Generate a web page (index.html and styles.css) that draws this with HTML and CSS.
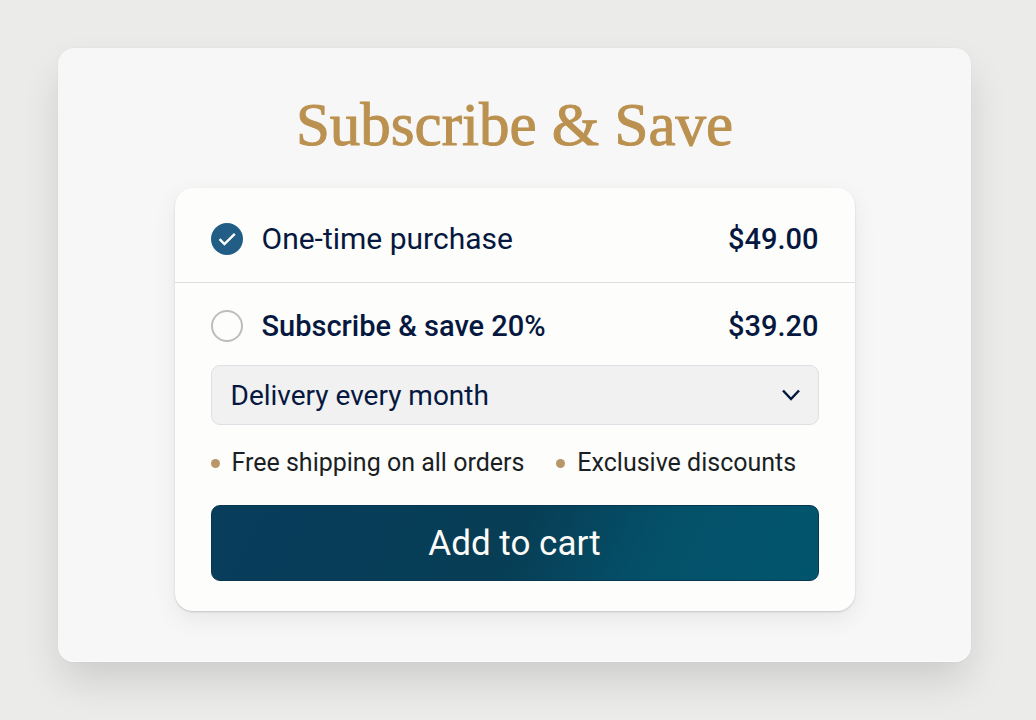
FILE: index.html
```html
<!DOCTYPE html>
<html lang="en">
<head>
<meta charset="utf-8">
<meta name="viewport" content="width=device-width, initial-scale=1">
<title>Subscribe &amp; Save</title>
<link rel="stylesheet" href="styles.css">
</head>
<body>
<main class="panel">
  <h1 class="title">Subscribe &amp; Save</h1>
  <form class="card">
    <div class="option option-single">
      <span class="choice">
        <input class="radio" type="radio" name="plan" id="plan-once" checked>
        <svg class="tick" viewBox="0 0 32 32" aria-hidden="true"><path d="M8.6 16.2 L13.4 21 L23.8 10.8"/></svg>
      </span>
      <label class="name" for="plan-once">One-time purchase</label>
      <span class="price">$49.00</span>
    </div>
    <div class="details">
      <div class="option">
        <span class="choice">
          <input class="radio" type="radio" name="plan" id="plan-sub">
          <svg class="tick" viewBox="0 0 32 32" aria-hidden="true"><path d="M8.6 16.2 L13.4 21 L23.8 10.8"/></svg>
        </span>
        <label class="name name-strong" for="plan-sub">Subscribe &amp; save 20%</label>
        <span class="price">$39.20</span>
      </div>
      <div class="delivery">
        <select class="select" aria-label="Delivery frequency">
          <option>Delivery every month</option>
        </select>
        <svg class="chevron" viewBox="0 0 20 12" aria-hidden="true"><path d="M2 1.5 L10 10 L18 1.5"/></svg>
      </div>
      <ul class="benefits">
        <li class="benefit">Free shipping on all orders</li>
        <li class="benefit">Exclusive discounts</li>
      </ul>
      <button class="button" type="button">Add to cart</button>
    </div>
  </form>
</main>
</body>
</html>
```

FILE: styles.css
```css
* {
  box-sizing: border-box;
}

body {
  margin: 0;
  min-height: 100vh;
  padding: 48px 65px 58px 58px;
  background: #ebebea;
  color: #06183f;
  font-family: Roboto, "Liberation Sans", sans-serif;
}

.panel {
  padding: 39px 24px 51px;
  border-radius: 16px;
  background: #f7f7f7;
  box-shadow: inset 0 -1px 0 #fcfcfc, 0 0 2px rgba(0, 0, 0, 0.06), 0 20px 40px -4px rgba(0, 0, 0, 0.14);
}

.title {
  margin: 0 0 25px;
  color: #bb9150;
  font: 400 61px/76px "Liberation Serif", serif;
  text-align: center;
  -webkit-text-stroke: 1px #bb9150;
}

.card {
  max-width: 680px;
  margin: 0 auto;
  border-radius: 18px;
  background: #fdfdfb;
  box-shadow: 0 1px 2px rgba(0, 0, 0, 0.16), 0 8px 24px rgba(0, 0, 0, 0.07);
}

.option {
  display: flex;
  align-items: center;
  gap: 19px;
  font-size: 30px;
  line-height: 36px;
}

.option-single {
  padding: 33px 36px 25px;
  border-bottom: 1px solid #dfdfdf;
}

.details {
  display: flex;
  flex-direction: column;
  padding: 25px 36px 30px;
}

.choice {
  display: grid;
  flex: none;
}

.radio,
.tick {
  grid-area: 1 / 1;
  width: 32px;
  height: 32px;
  margin: 0;
}

.radio {
  appearance: none;
  border: 2px solid #bcbdbf;
  border-radius: 50%;
}

.radio:checked {
  border-color: #225d86;
  background: #225d86;
}

.tick {
  display: none;
  fill: none;
  stroke: #fff;
  stroke-width: 2.4;
  pointer-events: none;
}

.radio:checked + .tick {
  display: block;
}

.name {
  flex: 1;
}

.name-strong,
.price {
  font-size: 29px;
  font-weight: 500;
}

.delivery {
  display: grid;
  align-items: center;
  margin-top: 21px;
}

.select,
.chevron {
  grid-area: 1 / 1;
}

.select {
  width: 100%;
  height: 60px;
  padding: 2px 56px 0 19px;
  border: 1px solid #dfe0e3;
  border-radius: 9px;
  appearance: none;
  background: #f1f1f2;
  color: inherit;
  font: 400 28px/36px Roboto, "Liberation Sans", sans-serif;
}

.chevron {
  justify-self: end;
  width: 20px;
  height: 12px;
  margin-right: 18px;
  fill: none;
  stroke: #06183f;
  stroke-width: 2.5;
  pointer-events: none;
}

.benefits {
  display: flex;
  flex-wrap: wrap;
  gap: 8px 32px;
  margin: 22px 0 26px;
  padding: 0;
  list-style: none;
  color: #1b1f24;
  font-size: 25px;
  line-height: 32px;
}

.benefit {
  display: flex;
  align-items: center;
  gap: 12px;
}

.benefit::before {
  content: "";
  width: 9px;
  height: 9px;
  border-radius: 50%;
  background: #b9966a;
}

.button {
  height: 76px;
  padding: 2px 24px 0;
  border: 1px solid #073651;
  border-radius: 9px;
  background: linear-gradient(115deg, #083d5c 0%, #073e55 50%, #045069 72%, #02556e 100%);
  color: #fdfbf7;
  font: 400 35px/44px Roboto, "Liberation Sans", sans-serif;
}
```
